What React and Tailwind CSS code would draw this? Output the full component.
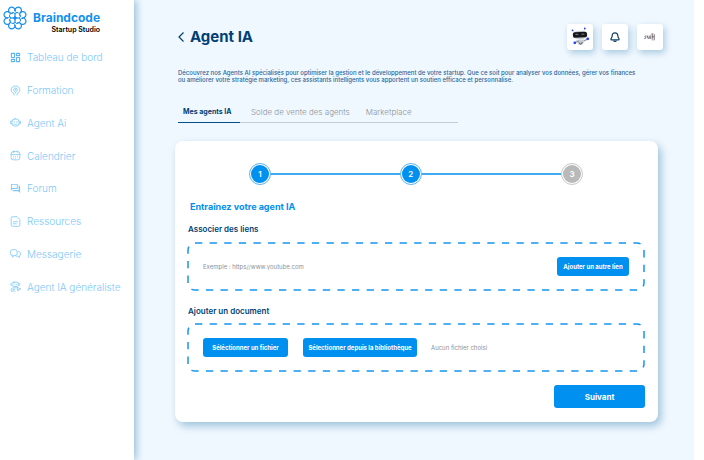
import React from "react";
import { LayoutDashboard } from "lucide-react";
import { MdOutlineQuestionAnswer } from "react-icons/md";

function Icon({ children }) {
  return (
    <svg
      viewBox="0 0 24 24"
      className="h-full w-full"
      fill="none"
      stroke="currentColor"
      strokeWidth="1.8"
      strokeLinecap="round"
      strokeLinejoin="round"
      aria-hidden="true"
    >
      {children}
    </svg>
  );
}

const navItems = [
  { label: "Tableau de bord", icon: <LayoutDashboard className="h-full w-full text-[#5db4f0]" strokeWidth={2.4} /> },
  {
    label: "Formation",
    icon: (
      <Icon>
        <path d="M8.500 22v-3.500C4.800 17.300 2.500 14.300 2.500 10.800 2.500 5.800 6.700 2 12 2s9.500 3.800 9.500 8.800c0 3.500-2.300 6.500-6 7.700V22" />
        <path d="M12 16.500c-2.500-2.200-4-4-4-6a4 4 0 0 1 8 0c0 2-1.500 3.800-4 6z" />
        <circle cx="12" cy="10.500" r=".8" />
      </Icon>
    ),
  },
  {
    label: "Agent Ai",
    icon: (
      <Icon>
        <rect x="4" y="4" width="16" height="16" rx="7" />
        <path d="M4 9H2.500A1.500 1.500 0 0 0 1 10.500v3A1.500 1.500 0 0 0 2.500 15H4M20 9h1.500a1.500 1.500 0 0 1 1.500 1.500v3a1.500 1.500 0 0 1-1.500 1.500H20" />
        <path d="M9 10v1.500M15 10v1.500M9 15.500c1.800 1.300 4.200 1.300 6 0" />
      </Icon>
    ),
  },
  {
    label: "Calendrier",
    icon: (
      <Icon>
        <rect x="2.500" y="3.500" width="19" height="18" rx="5" />
        <path d="M2.500 10h19M8 2v3M16 2v3" />
        <path d="M7.500 14.500h.1M12 14.500h.1M16.500 14.500h.1M7.500 18h.1M12 18h.1" />
      </Icon>
    ),
  },
  { label: "Forum", icon: <MdOutlineQuestionAnswer className="h-full w-full" /> },
  {
    label: "Ressources",
    icon: (
      <Icon>
        <path d="M14.500 1.500H6A3.500 3.500 0 0 0 2.500 5v14A3.500 3.500 0 0 0 6 22.500h12a3.500 3.500 0 0 0 3.500-3.500V8.500z" />
        <path d="M7.500 12.500h9M7.500 17h6" />
      </Icon>
    ),
  },
  {
    label: "Messagerie",
    icon: (
      <Icon>
        <path d="M6 16.500A5 5 0 0 1 1 11.500v-3a5 5 0 0 1 5-5h4.500a5 5 0 0 1 5 5v3a5 5 0 0 1-5 5H9L5.500 19.500z" />
        <path d="M18.500 7.500c2.700 .3 4.500 2.300 4.500 5v.500c0 2-1 3.700-2.500 4.500v3.500L17 18h-2c-1.300 0-2.300-.4-3-1" />
      </Icon>
    ),
  },
  {
    label: "Agent IA généraliste",
    icon: (
      <Icon>
        <rect x="4" y="2.500" width="15" height="9.500" rx="4.500" />
        <path d="M9 7v.5M14 7v.5M2 6v3M21 6v3" />
        <path d="M11 22H2.500v-2.500A5 5 0 0 1 7.500 15h5M7 18.500h3" />
        <path d="M15 14.500l2.500 7.500 1.600-3.200L22.500 17.500z" />
      </Icon>
    ),
  },
];

const spokes = [0, 45, 90, 135, 180, 225, 270, 315];

function Logo() {
  return (
    <svg viewBox="-12 -12 24 24" className="size-6 shrink-0 text-[#1590ee]" fill="none" stroke="currentColor" strokeLinecap="round" aria-hidden="true">
      {spokes.map((angle) => (
        <g key={angle} transform={`rotate(${angle})`}>
          <path d="M0 -7.600A3.200 3.200 0 1 1 5.370 -5.370" strokeWidth="1.200" />
          <path d="M0 -7.600C0 -6.400 .5 -5.600 1.600 -5.200" strokeWidth="1" />
        </g>
      ))}
      {[0, 90, 180, 270].map((angle) => (
        <path key={angle} transform={`rotate(${angle})`} d="M0 -4.200A2.300 2.300 0 0 1 4.200 -4.200A2.300 2.300 0 0 1 4.200 0M0 -4.200V-1" strokeWidth="1" />
      ))}
      <path d="M0 -3L.9 -.9L3 0L.9 .9L0 3L-.9 .9L-3 0L-.9 -.9Z" fill="currentColor" stroke="none" />
    </svg>
  );
}

function Sidebar() {
  return (
    <aside className="relative z-10 w-[134px] shrink-0 bg-white pt-[6px] shadow-[2px_0_8px_rgba(0,95,150,0.4)]">
      <div className="flex h-[35px] items-start gap-[6px] pl-[3px]">
        <Logo />
        <div className="flex flex-col items-end pt-[5px]">
          <span className="text-[12px] leading-[14px] font-bold text-[#1590ee]">Braindcode</span>
          <span className="text-[7px] leading-[9px] font-semibold text-black">Startup Studio</span>
        </div>
      </div>
      <nav>
        <ul className="grid h-[262px] grid-rows-8">
          {navItems.map((item) => (
            <li key={item.label} className="flex items-center">
              <a href="#" className="flex items-center gap-[6px] pl-[10px] text-[10px] leading-[14px] font-light whitespace-nowrap text-[#7cc8fa]">
                <span className="size-[11px]">{item.icon}</span>
                {item.label}
              </a>
            </li>
          ))}
        </ul>
      </nav>
    </aside>
  );
}

function Robot() {
  return (
    <svg viewBox="0 0 20 20" className="size-5" aria-hidden="true">
      <path d="M3 3.500L5 6M14.500 2L13.500 5" stroke="#c4c8cf" strokeWidth=".6" />
      <ellipse cx="10" cy="8" rx="7.600" ry="4.200" fill="#c9cdd4" />
      <rect x="3" y="5" width="14" height="5.600" rx="1.800" fill="#17181c" transform="rotate(-3 10 8)" />
      <path d="M5.500 7.400h2.800M11.500 7.200h2.800" stroke="#777d88" strokeWidth="1" />
      <path d="M6 13C8 12.300 12 12.300 14.500 12.800L13.200 16.800C12 18.600 9 18.600 8 16.800Z" fill="#c9cdd4" />
      <path d="M9 15.500L10.500 17.300L12.500 15" stroke="#4a4c52" strokeWidth="1" fill="none" />
      <path d="M5 15.500L9 14M14 14L17.500 12" stroke="#8f949e" strokeWidth="1.300" />
      <circle cx="2.500" cy="3.300" r=".9" fill="#2440f5" />
      <circle cx="14.800" cy="1.500" r=".9" fill="#2440f5" />
      <circle cx="4.800" cy="15.800" r="1.400" fill="#2440f5" />
      <circle cx="17.800" cy="11.800" r="1.400" fill="#2440f5" />
    </svg>
  );
}

const tile =
  "flex size-[26px] items-center justify-center rounded-[3px] bg-white shadow-[2px_3px_7px_rgba(0,95,150,0.3)]";

function Header() {
  return (
    <header className="flex items-center justify-between pr-[31px] pl-[44px]">
      <div className="flex items-center gap-[5px]">
        <button type="button" aria-label="Retour">
          <svg viewBox="0 0 7 10" className="h-[10px] w-[7px]" fill="none" stroke="#003f74" strokeWidth="1.200" aria-hidden="true">
            <path d="M5.500 .5L1 5L5.500 9.500" />
          </svg>
        </button>
        <h1 className="text-[15px] leading-[20px] font-bold text-[#003f74]">Agent IA</h1>
      </div>
      <div className="flex gap-[9px]">
        <button type="button" aria-label="Assistant" className={tile}>
          <Robot />
        </button>
        <button type="button" aria-label="Notifications" className={tile}>
          <svg viewBox="0 0 10 10" className="size-[10px]" fill="none" stroke="#123f68" strokeWidth="1.200" strokeLinecap="round" strokeLinejoin="round" aria-hidden="true">
            <path d="M5 .8C3.200 .8 2.200 2.100 2.200 3.700C2.200 5.600 .9 6 .9 7.300C.9 7.700 1.200 7.900 1.600 7.900H8.400C8.800 7.900 9.100 7.700 9.100 7.300C9.100 6 7.800 5.600 7.800 3.700C7.800 2.100 6.800 .8 5 .8Z" />
            <path d="M3.900 9C4.500 9.500 5.500 9.500 6.100 9" />
          </svg>
        </button>
        <button type="button" aria-label="Profil" className={tile}>
          <svg viewBox="0 0 12 8" className="h-[8px] w-[12px]" fill="none" stroke="#6b666e" strokeWidth=".9" strokeLinecap="round" aria-hidden="true">
            <path d="M2.300 3C1 2.500 .4 3.800 1.400 4.200C2.400 4.600 2 5.700 .5 5.400M3.500 3V4.700C3.600 5.700 5 5.600 5.200 4.600V3M5.200 4.600V5.500M6.700 2.800V5.500M8.300 1V5.500M8.300 3.800H10.200M10.200 1.500V7" />
            <path d="M7.200 1.200L8.800 .5M7.800 6.800H9" stroke="#c98b8b" />
          </svg>
        </button>
      </div>
    </header>
  );
}

function Tabs() {
  return (
    <nav className="ml-[44px] flex w-[280px] border-b border-[#c5ccd2] text-[8px] leading-[12px] font-light whitespace-nowrap text-[#8d9297]">
      <a href="#" className="-mb-px w-[62px] border-b border-[#00508c] pb-[4px] pl-[5px] text-[7px] font-bold text-[#003f74]">
        Mes agents IA
      </a>
      <a href="#" className="pb-[4px] pl-[11px]">Solde de vente des agents</a>
      <a href="#" className="pb-[4px] pl-[16px]">Marketplace</a>
    </nav>
  );
}

function Step({ number, done }) {
  return (
    <li
      className={
        "flex size-[22px] shrink-0 items-center justify-center rounded-full border p-px " +
        (done ? "border-[#5db4ee]" : "border-[#c9c9c9]")
      }
    >
      <span
        className={
          "flex size-[18px] items-center justify-center rounded-full text-[8px] leading-[10px] font-semibold text-white " +
          (done ? "bg-[#0090f0]" : "bg-[#b9b9b9]")
        }
      >
        {number}
      </span>
    </li>
  );
}

function DashedBox({ children }) {
  return (
    <div className="relative flex h-[47px] items-center px-[15px]">
      <svg className="pointer-events-none absolute inset-0 h-full w-full overflow-visible" aria-hidden="true">
        <rect width="100%" height="100%" rx="7" fill="none" stroke="#1496f0" strokeWidth="1.500" pathLength="136" strokeDasharray="1 1" />
      </svg>
      {children}
    </div>
  );
}

const smallButton =
  "h-[19px] rounded-[3px] bg-[#0090f0] text-center text-[6px] leading-[10px] font-bold whitespace-nowrap text-white";

function TrainingCard() {
  return (
    <section className="rounded-[8px] bg-white px-[13px] pt-[22px] pb-[14px] shadow-[3px_4px_9px_rgba(0,95,150,0.35)]">
      <ol className="flex items-center pr-[62px] pl-[61px]">
        <Step number="1" done />
        <li aria-hidden="true" className="h-[2px] flex-[12] bg-[#3fa9f2]" />
        <Step number="2" done />
        <li aria-hidden="true" className="h-[2px] flex-[13] bg-[#3fa9f2]" />
        <Step number="3" />
      </ol>
      <h2 className="mt-[16px] pl-[2px] text-[9px] leading-[12px] font-bold text-[#0090f0]">Entraînez votre agent IA</h2>
      <form>
        <label htmlFor="lien" className="mt-[11px] block text-[8px] leading-[10px] font-semibold text-[#003f74]">
          Associer des liens
        </label>
        <div className="mt-[9px] pr-px">
          <DashedBox>
            <input
              id="lien"
              type="url"
              placeholder="Exemple : https//www.youtube.com"
              className="min-w-0 flex-1 bg-transparent text-[6px] leading-[10px] text-[#8d9297] outline-none placeholder:text-[#8d9297]"
            />
            <button type="button" className={smallButton + " w-[72px]"}>Ajouter un autre lien</button>
          </DashedBox>
        </div>
        <h3 id="document" className="mt-[16px] text-[8px] leading-[10px] font-semibold text-[#003f74]">Ajouter un document</h3>
        <div className="mt-[8px] pr-px" role="group" aria-labelledby="document">
          <DashedBox>
            <button type="button" className={smallButton + " w-[85px]"}>Séléctionner un fichier</button>
            <button type="button" className={smallButton + " ml-[15px] w-[114px]"}>Sélectionner depuis la bibliothèque</button>
            <span className="ml-[14px] text-[6px] leading-[10px] text-[#8d9297]">Aucun fichier choisi</span>
          </DashedBox>
        </div>
        <div className="mt-[14px] flex justify-end">
          <button type="submit" className="h-[23px] w-[91px] rounded-[3px] bg-[#0090f0] text-[8px] leading-[12px] font-bold text-white">
            Suivant
          </button>
        </div>
      </form>
    </section>
  );
}

export default function App() {
  return (
    <div className="flex min-h-screen bg-white pr-[10px] font-['Inter',sans-serif]">
      <Sidebar />
      <main className="min-w-0 flex-1 bg-[#f0f8ff] pt-[24px]">
        <Header />
        <p className="mt-[19px] pl-[44px] text-[6px] leading-[7px] font-medium whitespace-nowrap text-[#1f6699]">
          Découvrez nos Agents AI spécialisés pour optimiser la gestion et le développement de votre startup. Que ce soit pour analyser vos données, gérer vos finances
          <br />
          ou améliorer votre stratégie marketing, ces assistants intelligents vous apportent un soutien efficace et personnalisé.
        </p>
        <div className="mt-[23px]">
          <Tabs />
        </div>
        <div className="mt-[18px] pr-[36px] pb-[38px] pl-[41px]">
          <TrainingCard />
        </div>
      </main>
    </div>
  );
}
